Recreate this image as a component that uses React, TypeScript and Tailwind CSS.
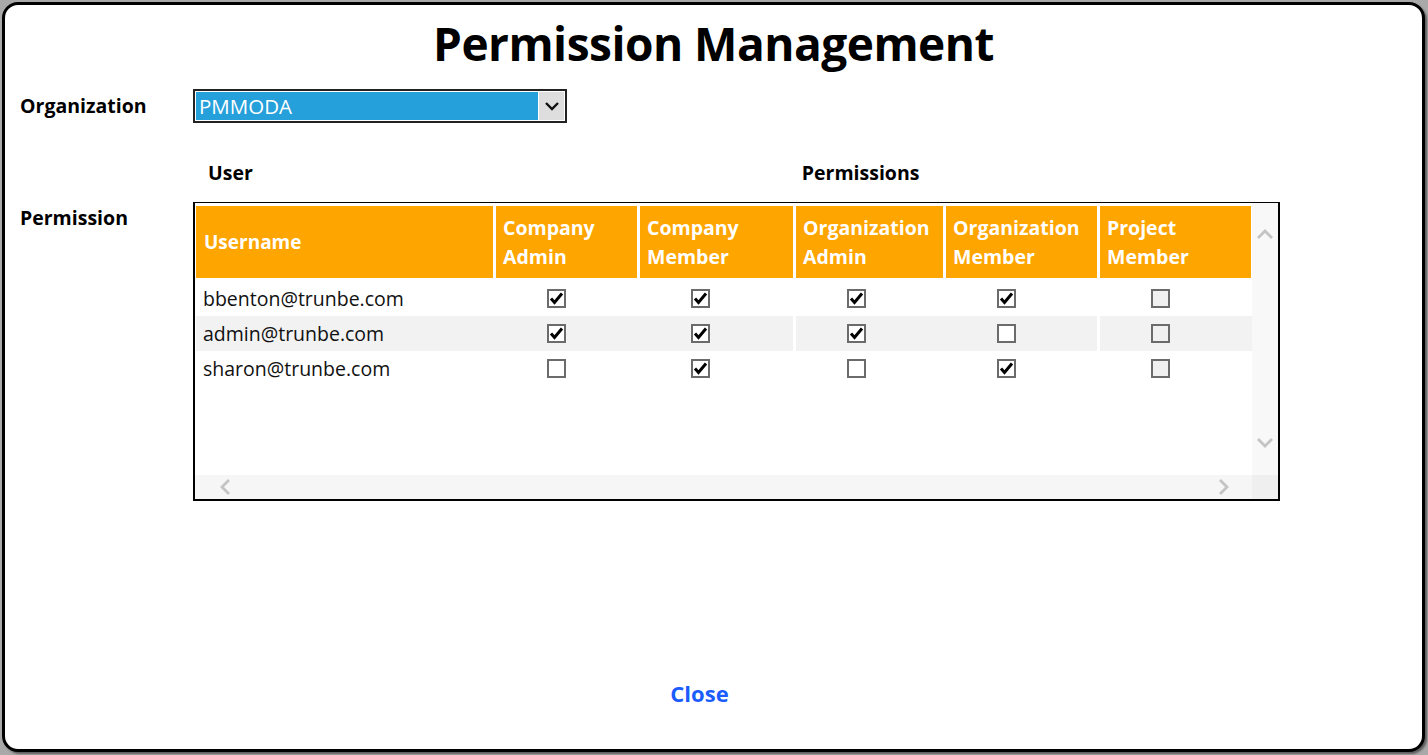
import { ReactNode } from 'react'

type Row = { user: string; perms: boolean[]; shaded?: boolean }

const rows: Row[] = [
  { user: 'bbenton@trunbe.com', perms: [true, true, true, true, false] },
  { user: 'admin@trunbe.com', perms: [true, true, true, false, false], shaded: true },
  { user: 'sharon@trunbe.com', perms: [false, true, false, true, false] },
]

const cols = [
  { top: 'Company', bottom: 'Admin', w: 'w-[144px]' },
  { top: 'Company', bottom: 'Member', w: 'w-[156px]' },
  { top: 'Organization', bottom: 'Admin', w: 'w-[150px]' },
  { top: 'Organization', bottom: 'Member', w: 'w-[154px]' },
  { top: 'Project', bottom: 'Member', w: 'w-[151px]' },
]

const font = { fontFamily: '"Open Sans", "Noto Sans", sans-serif' }

function Check({ on, dim }: { on: boolean; dim?: boolean }) {
  return (
    <div
      className={`w-[19px] h-[19px] border-2 border-[#6b6b6b] flex items-center justify-center ${
        dim ? 'bg-[#f0f0f0]' : 'bg-white'
      }`}
    >
      {on && (
        <svg width="15" height="15" viewBox="0 0 15 15">
          <path d="M2 7.5 L5.5 11.5 L13 2.5" fill="none" stroke="#000" strokeWidth="3" />
        </svg>
      )}
    </div>
  )
}

function Chevron({ dir }: { dir: 'up' | 'down' | 'left' | 'right' }) {
  const d = {
    up: 'M2 11 L9 4 L16 11',
    down: 'M2 4 L9 11 L16 4',
    left: 'M11 2 L4 9 L11 16',
    right: 'M5 2 L12 9 L5 16',
  }[dir]
  return (
    <svg width="18" height="18" viewBox="0 0 18 18">
      <path d={d} fill="none" stroke="#c4c4c4" strokeWidth="2.8" />
    </svg>
  )
}

function Label({ children }: { children: ReactNode }) {
  return <span className="text-[19.5px] font-bold text-black leading-6">{children}</span>
}

export default function App() {
  return (
    <div className="h-[755px] w-[1428px] bg-[#a9a9a9] p-[2px] pr-[3px] pb-[3px]" style={font}>
      <div className="h-full border-[3px] border-black rounded-[16px] bg-white flex flex-col shadow-[2px_2px_2px_rgba(0,0,0,0.45)]">
        <div className="h-[76px] flex items-center justify-center">
          <h1 className="text-[46px] font-bold text-black leading-none tracking-[-0.5px]">Permission Management</h1>
        </div>

        <div className="mt-[8px] flex items-center">
          <div className="w-[188px] pl-[15px]">
            <Label>Organization</Label>
          </div>
          <div className="w-[374px] h-[34px] border-2 border-[#222] flex bg-white p-px">
            <div className="flex-1 bg-[#26a0da] text-white text-[20.5px] leading-[28px] pl-[3px]">PMMODA</div>
            <div className="w-[25px] ml-px bg-[#dedede] flex items-center justify-center">
              <svg width="16" height="12" viewBox="0 0 16 12">
                <path d="M2 3 L8 9 L14 3" fill="none" stroke="#111" strokeWidth="2.4" />
              </svg>
            </div>
          </div>
        </div>

        <div className="mt-[38px] flex items-center h-6">
          <div className="w-[203px]" />
          <Label>User</Label>
          <div className="w-[549px]" />
          <Label>Permissions</Label>
        </div>

        <div className="mt-[17px] flex">
          <div className="w-[188px] pl-[15px] pt-[4px]">
            <Label>Permission</Label>
          </div>
          <div className="w-[1087px] h-[299px] border-2 border-t border-black flex flex-col">
            <div className="flex flex-1 min-h-0">
              <div className="flex-1 pt-[3px] pl-px">
                <div className="flex h-[72px] bg-white">
                  <div className="w-[300px] border-r-[3px] border-white bg-[#ffa500] flex items-center pl-[8px] text-white font-bold text-[19px]">
                    Username
                  </div>
                  {cols.map((c, i) => (
                    <div
                      key={i}
                      className={`${c.w} ${i < 4 ? 'border-r-[3px] border-white' : ''} bg-[#ffa500] flex flex-col justify-center pl-[7px] text-white font-bold text-[19.5px] leading-[29px]`}
                    >
                      <span>{c.top}</span>
                      <span>{c.bottom}</span>
                    </div>
                  ))}
                </div>
                <div className="mt-[3px]">
                  {rows.map((r) => (
                    <div key={r.user} className={`flex h-[35px] ${r.shaded ? 'bg-[#f2f2f2]' : 'bg-white'}`}>
                      <div className="w-[300px] flex items-center pl-[7px] text-[19.5px] text-[#111]">{r.user}</div>
                      {cols.map((c, i) => (
                        <div
                          key={i}
                          className={`${c.w} flex items-center pl-[51px] ${
                            r.shaded && (i === 1 || i === 3) ? 'border-r-[3px] border-white' : ''
                          }`}
                        >
                          <Check on={r.perms[i]} dim={i === 4} />
                        </div>
                      ))}
                    </div>
                  ))}
                </div>
              </div>
              <div className="w-[26px] bg-[#f8f8f8] flex flex-col items-center justify-between pt-[24px] pb-[22px]">
                <Chevron dir="up" />
                <Chevron dir="down" />
              </div>
            </div>
            <div className="h-[24px] flex">
              <div className="flex-1 bg-[#f6f6f6] flex items-center justify-between pl-[23px] pr-[19px]">
                <Chevron dir="left" />
                <Chevron dir="right" />
              </div>
              <div className="w-[26px] bg-[#efefef]" />
            </div>
          </div>
        </div>

        <div className="mt-auto mb-[42px] flex justify-center">
          <button className="text-[22px] font-bold text-[#1b5cff] leading-7 ml-[-28px]">Close</button>
        </div>
      </div>
    </div>
  )
}
